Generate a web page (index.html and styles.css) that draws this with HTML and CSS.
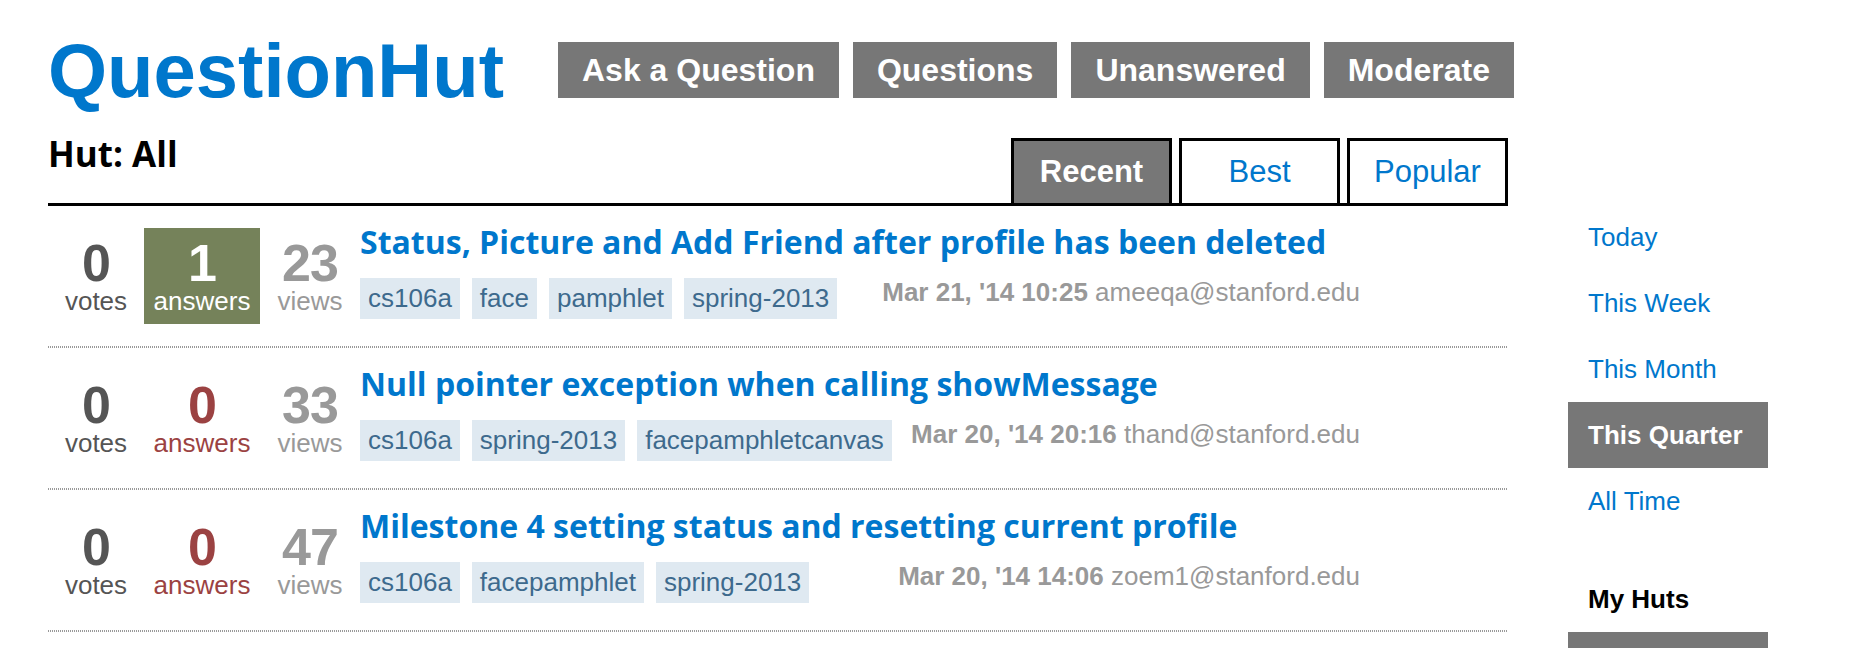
FILE: index.html
```html
<!DOCTYPE html>
<html lang="en">
<head>
<meta charset="utf-8">
<title>QuestionHut</title>
<link rel="stylesheet" href="styles.css">
</head>
<body>
<div class="page">
  <header class="masthead">
    <a class="logo" href="#">QuestionHut</a>
    <nav class="mainnav">
      <a href="#">Ask a Question</a>
      <a href="#">Questions</a>
      <a href="#">Unanswered</a>
      <a href="#">Moderate</a>
    </nav>
  </header>

  <div class="subhead">
    <h2 class="hut">Hut: All</h2>
    <div class="tabs">
      <a class="tab active" href="#">Recent</a>
      <a class="tab" href="#">Best</a>
      <a class="tab" href="#">Popular</a>
    </div>
  </div>

  <main class="questions">
    <div class="q">
      <div class="stats">
        <div class="stat votes"><div class="num">0</div><div class="lbl">votes</div></div>
        <div class="stat answers answered"><div class="num">1</div><div class="lbl">answers</div></div>
        <div class="stat views"><div class="num">23</div><div class="lbl">views</div></div>
      </div>
      <div class="qbody">
        <a class="qtitle" href="#">Status, Picture and Add Friend after profile has been deleted</a>
        <div class="qmeta">
          <div class="tags"><span class="tag">cs106a</span><span class="tag">face</span><span class="tag">pamphlet</span><span class="tag">spring-2013</span></div>
          <div class="info"><b>Mar 21, '14 10:25</b> ameeqa@stanford.edu</div>
        </div>
      </div>
    </div>

    <div class="q">
      <div class="stats">
        <div class="stat votes"><div class="num">0</div><div class="lbl">votes</div></div>
        <div class="stat answers"><div class="num">0</div><div class="lbl">answers</div></div>
        <div class="stat views"><div class="num">33</div><div class="lbl">views</div></div>
      </div>
      <div class="qbody">
        <a class="qtitle" href="#">Null pointer exception when calling showMessage</a>
        <div class="qmeta">
          <div class="tags"><span class="tag">cs106a</span><span class="tag">spring-2013</span><span class="tag">facepamphletcanvas</span></div>
          <div class="info"><b>Mar 20, '14 20:16</b> thand@stanford.edu</div>
        </div>
      </div>
    </div>

    <div class="q">
      <div class="stats">
        <div class="stat votes"><div class="num">0</div><div class="lbl">votes</div></div>
        <div class="stat answers"><div class="num">0</div><div class="lbl">answers</div></div>
        <div class="stat views"><div class="num">47</div><div class="lbl">views</div></div>
      </div>
      <div class="qbody">
        <a class="qtitle" href="#">Milestone 4 setting status and resetting current profile</a>
        <div class="qmeta">
          <div class="tags"><span class="tag">cs106a</span><span class="tag">facepamphlet</span><span class="tag">spring-2013</span></div>
          <div class="info"><b>Mar 20, '14 14:06</b> zoem1@stanford.edu</div>
        </div>
      </div>
    </div>
  </main>

  <aside class="sidebar">
    <nav class="periods">
      <a href="#">Today</a>
      <a href="#">This Week</a>
      <a href="#">This Month</a>
      <a class="active" href="#">This Quarter</a>
      <a href="#">All Time</a>
    </nav>
    <h3 class="side-title">My Huts</h3>
    <nav class="periods">
      <a class="active" href="#" aria-label="All huts"></a>
    </nav>
  </aside>
</div>
</body>
</html>
```

FILE: styles.css
```css
* { box-sizing: border-box; }

html, body {
  margin: 0;
  padding: 0;
  background: #fff;
}

body {
  font-family: "Liberation Sans", Arial, Helvetica, sans-serif;
  color: #000;
  overflow: hidden;
}

a { text-decoration: none; }

.page {
  display: grid;
  grid-template-columns: 1460px 200px;
  column-gap: 60px;
  padding-left: 48px;
}

/* ---------- header ---------- */
.masthead {
  grid-column: 1 / -1;
  display: flex;
  align-items: flex-start;
  padding-top: 33px;
}

.logo {
  font-size: 76px;
  line-height: 76px;
  font-weight: bold;
  color: #0077cc;
  margin-right: 54px;
}

.mainnav {
  display: flex;
  gap: 14px;
  margin-top: 9px;
}

.mainnav a {
  display: block;
  height: 56px;
  line-height: 56px;
  padding: 0 24px;
  background: #777;
  color: #fff;
  font-size: 32px;
  font-weight: bold;
}

/* ---------- subheader ---------- */
.subhead {
  grid-column: 1;
  display: flex;
  justify-content: space-between;
  align-items: flex-end;
  height: 97px;
  border-bottom: 3px solid #000;
}

.hut {
  align-self: flex-start;
  margin: 25px 0 0 0;
  font-family: "Open Sans", Lato, sans-serif;
  font-size: 35px;
  line-height: 40px;
  font-weight: bold;
}

.tabs {
  display: flex;
  gap: 7px;
}

.tab {
  display: block;
  width: 161px;
  height: 65px;
  border: 3px solid #000;
  border-bottom: 0;
  text-align: center;
  font-size: 31px;
  line-height: 62px;
  color: #0077cc;
  background: #fff;
}

.tab.active {
  background: #777;
  color: #fff;
  font-weight: bold;
}

/* ---------- questions ---------- */
.questions {
  grid-column: 1;
  grid-row: 3;
}

.q {
  display: flex;
  align-items: flex-start;
  padding: 18px 0 24px;
  background: repeating-linear-gradient(to right, #999 0 1px, transparent 1px 2px) left bottom / 100% 2px no-repeat;
}

.stats {
  display: flex;
  margin-top: 4px;
}

.stat {
  text-align: center;
  padding: 11px 0 9px;
}

.stat.votes { width: 96px; color: #555; }
.stat.answers { width: 116px; color: #9b4242; }
.stat.answers.answered { background: #75825a; color: #fff; }
.stat.views { width: 100px; color: #999; }

.num {
  font-size: 52px;
  line-height: 48px;
  font-weight: bold;
  letter-spacing: -1px;
}

.lbl {
  font-size: 26px;
  line-height: 28px;
}

.qbody {
  width: 1000px;
}

.qtitle {
  display: block;
  font-family: "Open Sans", Lato, sans-serif;
  font-weight: bold;
  font-size: 32px;
  line-height: 36px;
  color: #0077cc;
  white-space: nowrap;
}

.qmeta {
  display: flex;
  justify-content: space-between;
  align-items: flex-start;
  margin-top: 18px;
}

.tags {
  display: flex;
  gap: 12px;
}

.tag {
  display: block;
  background: #dfe9f1;
  color: #3d6a8d;
  font-size: 26px;
  line-height: 29px;
  padding: 6px 8px;
}

.info {
  font-size: 26px;
  line-height: 29px;
  color: #999;
  white-space: nowrap;
}

/* ---------- sidebar ---------- */
.sidebar {
  grid-column: 2;
  grid-row: 3;
  margin-top: -2px;
}

.periods a {
  display: block;
  height: 66px;
  line-height: 66px;
  padding-left: 20px;
  font-size: 26px;
  color: #0077cc;
}

.periods a.active {
  background: #777;
  color: #fff;
  font-weight: bold;
}

.side-title {
  margin: 50px 0 18px;
  padding-left: 20px;
  font-size: 26px;
  line-height: 30px;
  font-weight: bold;
  color: #000;
}
```
